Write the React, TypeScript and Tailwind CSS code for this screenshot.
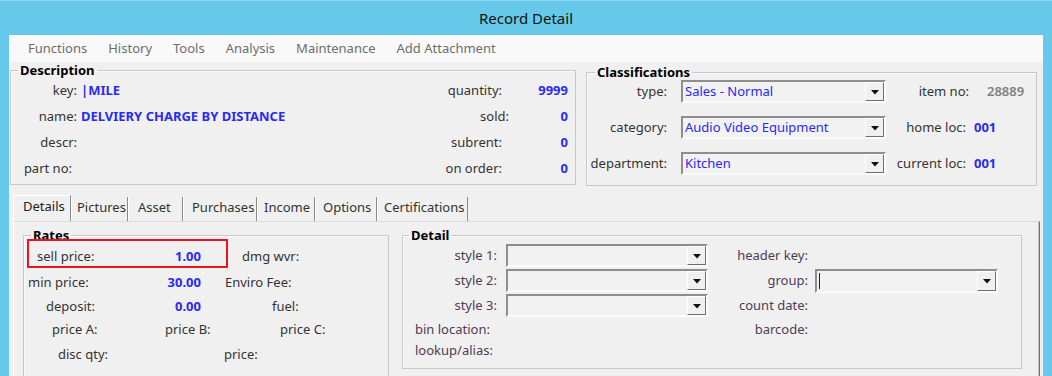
import React from "react";

const blue = "text-[#2a2af0]";

function Arrow() {
  return (
    <div className="w-[19px] h-full flex items-center justify-center bg-[#f0f0f0] border border-t-white border-l-white border-b-[#6f6f6f] border-r-[#6f6f6f]">
      <svg width="8" height="5" viewBox="0 0 8 5" className="mt-[2px]">
        <polygon points="0,0 8,0 4,4.5" fill="#111" />
      </svg>
    </div>
  );
}

function Combo({ value, className, cursor }: { value?: string; className: string; cursor?: boolean }) {
  return (
    <div
      className={`flex items-stretch border-2 border-t-[#8e8e8e] border-l-[#8e8e8e] border-b-[#fbfbfb] border-r-[#fbfbfb] bg-[#f2f2f2] ${className}`}
    >
      <div className={`flex-1 flex items-center pl-[2px] ${blue} whitespace-nowrap overflow-hidden`}>
        {cursor && <span className="w-[1px] h-[16px] bg-[#222]" />}
        {value}
      </div>
      <Arrow />
    </div>
  );
}

function GroupBox({
  title,
  className,
  legendClass,
  children,
}: {
  title: string;
  className: string;
  legendClass: string;
  children: React.ReactNode;
}) {
  return (
    <fieldset className={`border border-[#c9c9c9] shadow-[inset_1px_1px_0_#fafafa] min-w-0 ${className}`}>
      <legend className={`px-[2px] font-bold text-black leading-[16px] ${legendClass}`}>{title}</legend>
      {children}
    </fieldset>
  );
}

const descRows = [
  { l: "key:", v: "|MILE", r: "quantity:", rv: "9999" },
  { l: "name:", v: "DELVIERY CHARGE BY DISTANCE", r: "sold:", rv: "0" },
  { l: "descr:", v: "", r: "subrent:", rv: "0" },
  { l: "part no:", v: "", r: "on order:", rv: "0" },
];

const classRows = [
  { l: "type:", v: "Sales - Normal", r: "item no:" },
  { l: "category:", v: "Audio Video Equipment", r: "home loc:" },
  { l: "department:", v: "Kitchen", r: "current loc:" },
];

// tab widths and text insets read off the screenshot
const tabs = [
  { name: "Details", cls: "w-[58px] pl-[9px]" },
  { name: "Pictures", cls: "w-[57px] pl-[5px]" },
  { name: "Asset", cls: "w-[55px] pl-[9px]" },
  { name: "Purchases", cls: "w-[74px] pl-[8px]" },
  { name: "Income", cls: "w-[58px] pl-[6px]" },
  { name: "Options", cls: "w-[62px] pl-[7px]" },
  { name: "Certifications", cls: "w-[91px] pl-[6px]" },
];

const detailRows = [
  { l: "style 1:", combo: true, r: "header key:", h: "h-[25px]" },
  { l: "style 2:", combo: true, r: "group:", group: true, h: "h-[25px]" },
  { l: "style 3:", combo: true, r: "count date:", h: "h-[25px]" },
  { l: "bin location:", left: true, r: "barcode:", h: "h-[24px]" },
  { l: "lookup/alias:", left: true, r: "", h: "h-[18px]" },
];

export default function App() {
  return (
    <div className="relative w-[1052px] h-[376px] overflow-hidden bg-[#66c9ea] border-t border-[#8fd6ef] font-['Noto_Sans',sans-serif] text-[13px] text-[#333]">
      <div className="h-[34px] flex items-center justify-center text-[15px] text-[#111]">Record Detail</div>

      <div className="mx-[9px] h-[341px] bg-[#f0f0f0] flex flex-col">
        {/* menu */}
        <div className="h-[27px] shrink-0 bg-[#f9f9f9] flex items-center gap-[21px] pl-[19px] text-[#6d6d6d]">
          <span>Functions</span>
          <span>History</span>
          <span>Tools</span>
          <span>Analysis</span>
          <span>Maintenance</span>
          <span>Add Attachment</span>
        </div>

        {/* top groups */}
        <div className="flex items-start h-[124px] shrink-0">
          <GroupBox title="Description" className="ml-[1px] w-[566px] h-[123px]" legendClass="ml-[7px]">
            <div className="flex flex-col pr-[7px]">
              {descRows.map((r) => (
                <div key={r.l} className="h-[26px] flex items-center">
                  <span className={`w-[66px] text-right ${r.l === "part no:" ? "pr-[5px]" : ""}`}>{r.l}</span>
                  <span className={`ml-[4px] flex-1 font-bold ${blue}`}>{r.v}</span>
                  <span className={`text-right ${r.r === "sold:" ? "-mr-[7px]" : ""}`}>{r.r}</span>
                  <span className={`w-[66px] text-right font-bold ${blue}`}>{r.rv}</span>
                </div>
              ))}
            </div>
          </GroupBox>

          <GroupBox title="Classifications" className="ml-[10px] mt-[2px] w-[451px] h-[122px]" legendClass="ml-[8px]">
            <div className="flex flex-col gap-[13px]">
              {classRows.map((r, i) => (
                <div key={r.l} className="h-[23px] flex items-center">
                  <span className="w-[80px] text-right">{r.l}</span>
                  <Combo value={r.v} className="ml-[14px] w-[205px] h-[23px]" />
                  <span className={`text-right ${i === 0 ? "w-[83px]" : "w-[80px]"}`}>{r.r}</span>
                  {i === 0 ? (
                    <span className="ml-[18px] font-semibold text-[#808080]">28889</span>
                  ) : (
                    <span className={`ml-[8px] font-bold ${blue}`}>001</span>
                  )}
                </div>
              ))}
            </div>
          </GroupBox>
        </div>

        {/* tabs */}
        <div className="flex items-end ml-[4px] mt-[9px] h-[26px] shrink-0">
          {tabs.map((t, i) =>
            i === 0 ? (
              <div
                key={t.name}
                className={`${t.cls} h-[26px] flex items-center pb-[4px] border-l border-t border-r border-l-white border-t-white border-r-[#8a8a8a] bg-[#f0f0f0] text-[#222]`}
              >
                {t.name}
              </div>
            ) : (
              <div
                key={t.name}
                className={`${t.cls} h-[24px] flex items-center pb-[2px] border-l border-r border-l-white border-r-[#8a8a8a] text-[#333] whitespace-nowrap`}
              >
                {t.name}
              </div>
            )
          )}
        </div>

        {/* tab page */}
        <div className="flex-1 ml-[4px] mr-[3px] border-t border-l border-r border-t-[#dadada] border-l-white border-r-[#6e6e6e] shadow-[inset_-1px_0_0_#c6c6c6] flex items-start pt-[5px] pl-[9px]">
          <GroupBox title="Rates" className="w-[366px] h-[160px]" legendClass="ml-[7px]">
            <div className="flex flex-col">
              <div className="h-[27px] flex items-center">
                <span className="w-[86px] pl-[13px]">sell price:</span>
                <span className={`w-[91px] text-right font-bold ${blue}`}>1.00</span>
                <span className="ml-[41px]">dmg wvr:</span>
              </div>
              <div className="h-[25px] flex items-center">
                <span className="w-[86px] pl-[4px]">min price:</span>
                <span className={`w-[91px] text-right font-bold ${blue}`}>30.00</span>
                <span className="ml-[24px]">Enviro Fee:</span>
              </div>
              <div className="h-[23px] flex items-center">
                <span className="w-[86px] pl-[22px]">deposit:</span>
                <span className={`w-[91px] text-right font-bold ${blue}`}>0.00</span>
                <span className="ml-[71px]">fuel:</span>
              </div>
              <div className="h-[24px] flex items-center">
                <span className="w-[141px] pl-[28px]">price A:</span>
                <span className="w-[115px]">price B:</span>
                <span>price C:</span>
              </div>
              <div className="h-[25px] flex items-center">
                <span className="w-[200px] pl-[34px]">disc qty:</span>
                <span>price:</span>
              </div>
            </div>
          </GroupBox>

          <GroupBox title="Detail" className="ml-[13px] w-[620px] h-[142px]" legendClass="ml-[6px]">
            <div className="flex flex-col text-[#503a55]">
              {detailRows.map((r) => (
                <div key={r.l} className={`${r.h} flex items-center`}>
                  <span className={`w-[94px] whitespace-nowrap ${r.left ? "pl-[12px] text-left" : "text-right"}`}>{r.l}</span>
                  {r.combo ? (
                    <Combo className="ml-[9px] w-[202px] h-[23px]" />
                  ) : (
                    <span className="ml-[9px] w-[202px]" />
                  )}
                  <span className="w-[100px] text-right">{r.r}</span>
                  {r.group && <Combo cursor className="ml-[7px] w-[183px] h-[24px]" />}
                </div>
              ))}
            </div>
          </GroupBox>
        </div>
      </div>

      {/* annotation box drawn over the sell price row */}
      <div className="absolute left-[27px] top-[238px] w-[201px] h-[29px] border-2 border-[#e8161c]" />
    </div>
  );
}
